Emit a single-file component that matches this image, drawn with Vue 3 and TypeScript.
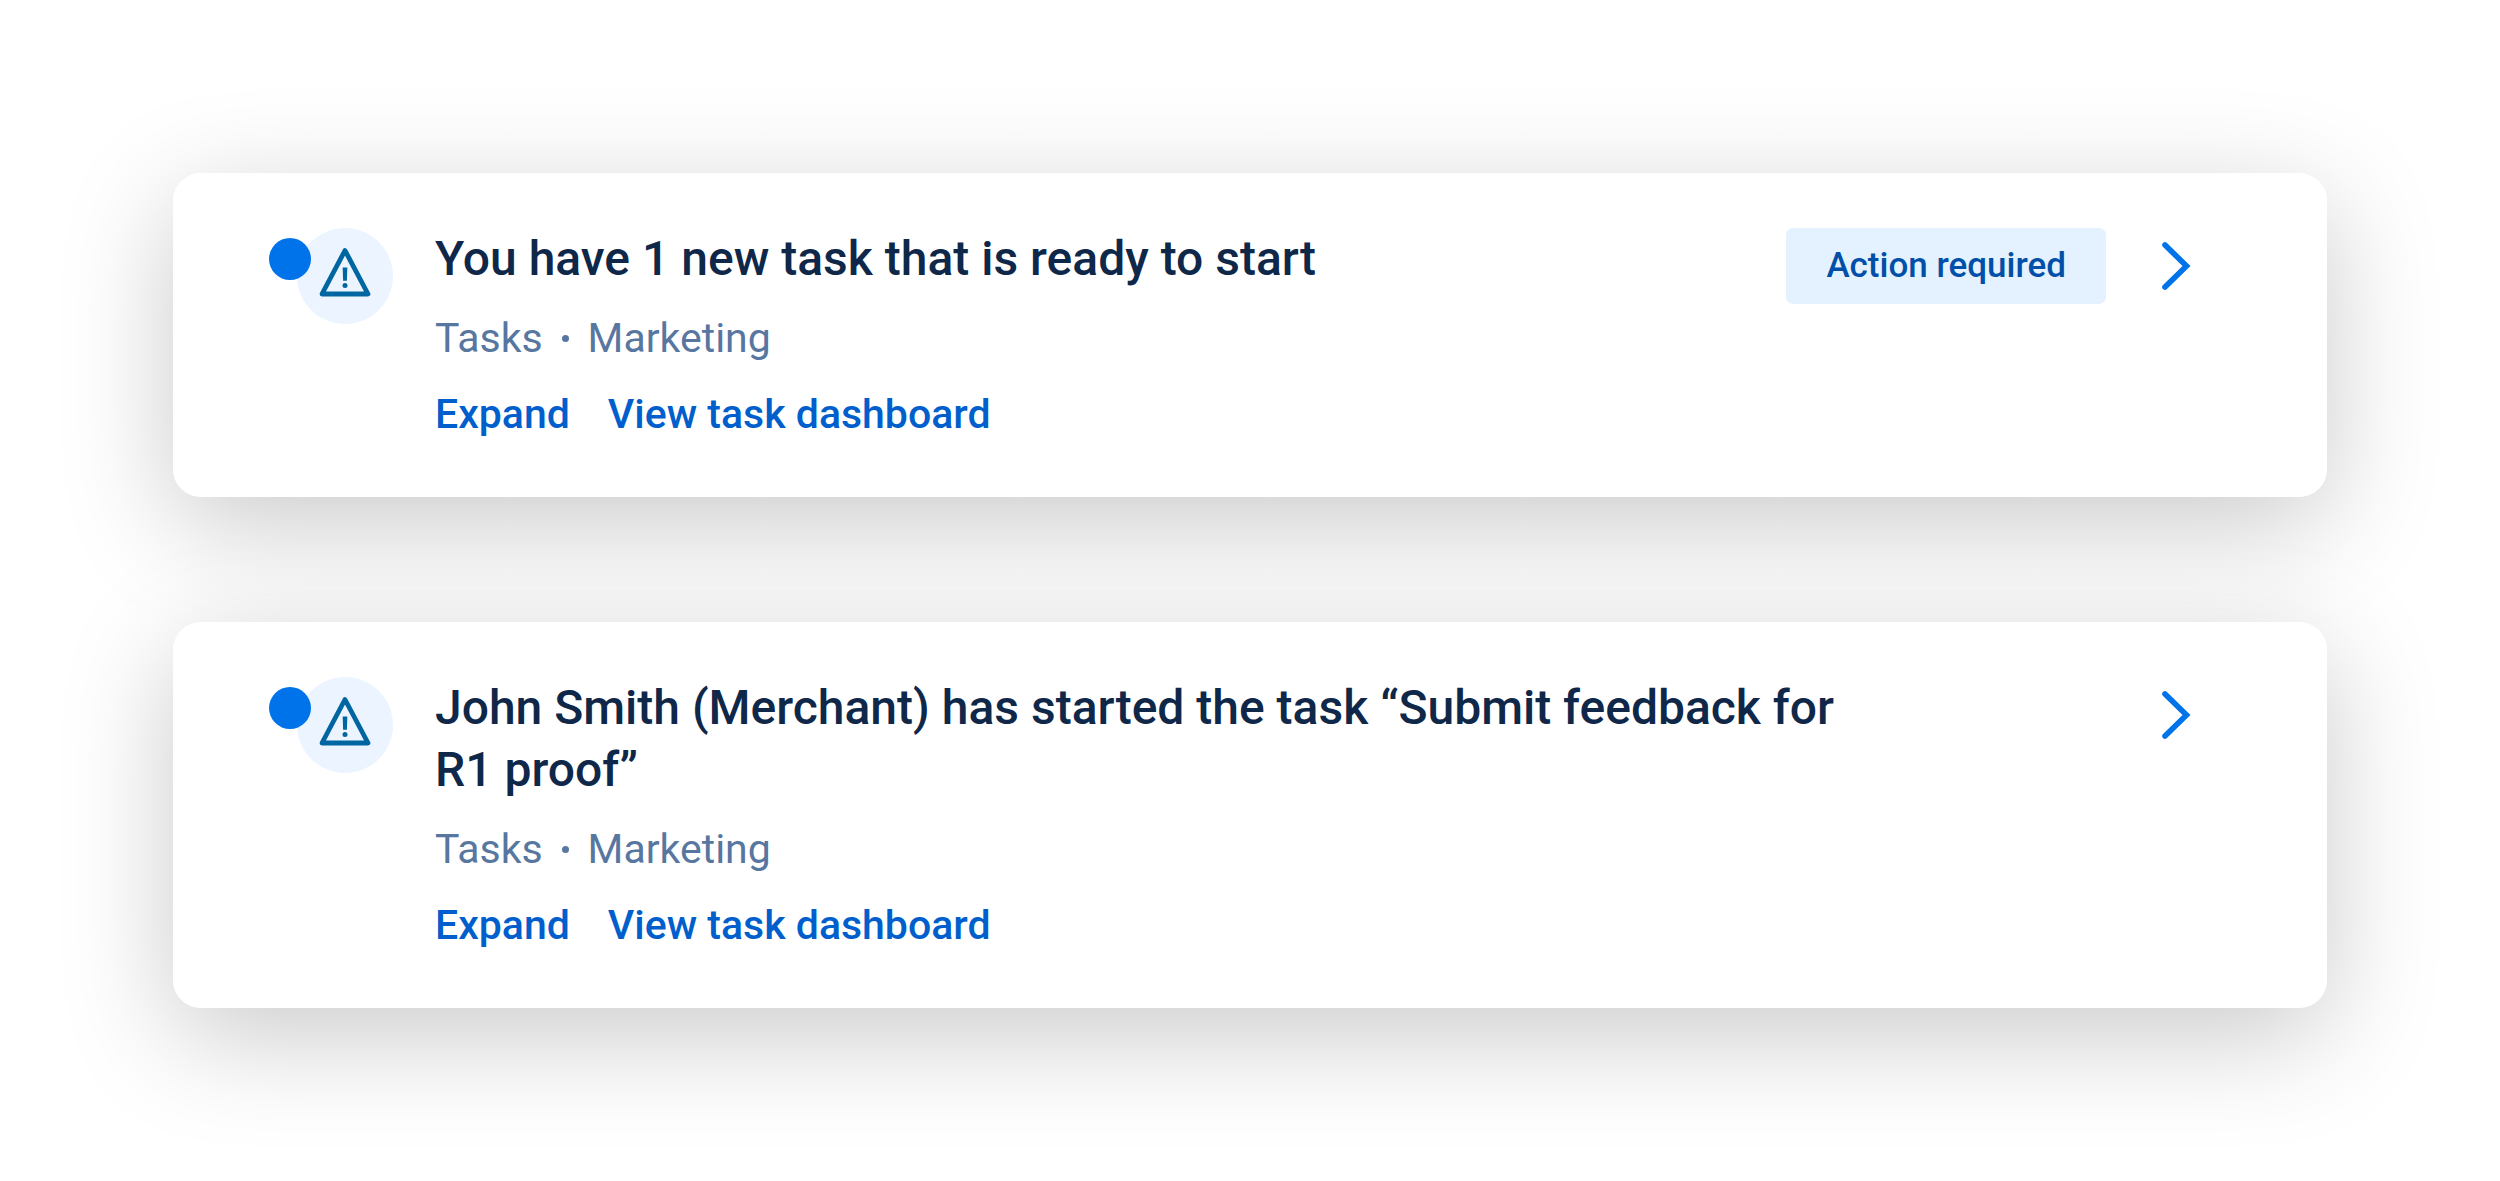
<script setup lang="ts">
interface Notification {
  id: number
  title: string
  source: string
  category: string
  badge?: string
}

const notifications: Notification[] = [
  {
    id: 1,
    title: 'You have 1 new task that is ready to start',
    source: 'Tasks',
    category: 'Marketing',
    badge: 'Action required',
  },
  {
    id: 2,
    title: 'John Smith (Merchant) has started the task “Submit feedback for R1 proof”',
    source: 'Tasks',
    category: 'Marketing',
  },
]
</script>

<template>
  <main class="feed">
    <article v-for="item in notifications" :key="item.id" class="card">
      <div class="marker">
        <span class="unread"></span>
        <span class="avatar">
          <svg class="warning" viewBox="0 0 52 50" aria-hidden="true">
            <path d="M26 3.500 L49 47 H3 Z" fill="none" stroke="#0066a1" stroke-width="4.800" stroke-linejoin="round" />
            <path d="M23.700 20.500 h4.600 l-.4 13.300 h-3.800 Z" fill="#0066a1" />
            <circle cx="26" cy="38.500" r="2.500" fill="#0066a1" />
          </svg>
        </span>
      </div>
      <div class="body">
        <h2 class="title">{{ item.title }}</h2>
        <p class="meta">
          <span>{{ item.source }}</span>
          <span class="dot"></span>
          <span>{{ item.category }}</span>
        </p>
        <div class="links">
          <button type="button" class="link">Expand</button>
          <a href="#" class="link">View task dashboard</a>
        </div>
      </div>
      <div class="aside">
        <span v-if="item.badge" class="badge">{{ item.badge }}</span>
        <button type="button" class="open" aria-label="Open">
          <svg class="chevron" viewBox="0 0 30 50" aria-hidden="true">
            <path d="M4 4 L25.500 25 L4 46" fill="none" stroke="#0073ea" stroke-width="5.600" stroke-linecap="round" />
          </svg>
        </button>
      </div>
    </article>
  </main>
</template>

<style>
body {
  margin: 0;
  background: #fff;
}
</style>

<style scoped>
.feed {
  position: relative;
  z-index: 0;
  display: flex;
  flex-direction: column;
  gap: 125px;
  padding: 173px;
  font-family: Roboto, sans-serif;
}

.card {
  position: relative;
  display: flex;
  align-items: flex-start;
  padding: 55px 110px 55px 96px;
  border-radius: 28px;
  background: #fff;
}

/* Shadows sit below every card so they never tint a neighbour */
.card::before {
  content: '';
  position: absolute;
  z-index: -1;
  inset: 0;
  border-radius: inherit;
  box-shadow: 0 28px 112px rgba(0, 0, 0, 0.21);
}

.marker {
  position: relative;
  flex: none;
  padding-left: 28px;
  margin-right: 42px;
}

.unread {
  position: absolute;
  top: 10px;
  left: 0;
  width: 42px;
  height: 42px;
  border-radius: 50%;
  background: #0073ea;
}

.avatar {
  display: flex;
  align-items: center;
  justify-content: center;
  width: 96px;
  height: 96px;
  border-radius: 50%;
  background: #ebf4ff;
}

.warning {
  width: 52px;
  height: 50px;
  margin-bottom: 8px;
}

.body {
  display: flex;
  flex: 1;
  flex-direction: column;
  gap: 21px;
  min-width: 0;
}

.title {
  margin: 0;
  color: #0f2849;
  font-size: 48px;
  font-weight: 500;
  line-height: 62px;
}

.meta {
  display: flex;
  align-items: center;
  margin: 0;
  color: #5776a0;
  font-size: 41px;
  line-height: 55px;
}

.dot {
  width: 7px;
  height: 7px;
  margin: 0 19px;
  border-radius: 50%;
  background: #5776a0;
}

.links {
  display: flex;
  gap: 38px;
}

.link {
  padding: 0;
  border: 0;
  background: none;
  color: #005fcc;
  font-family: inherit;
  font-size: 41px;
  font-weight: 500;
  line-height: 55px;
  text-decoration: none;
  cursor: pointer;
}

.aside {
  display: flex;
  flex: none;
  align-items: center;
  justify-content: flex-end;
  gap: 28px;
  min-width: 320px;
  height: 76px;
  margin-left: 28px;
}

.badge {
  padding: 0 40px;
  border-radius: 7px;
  background: #e4f1fe;
  color: #004fa8;
  font-size: 35px;
  font-weight: 500;
  line-height: 76px;
  white-space: nowrap;
}

.open {
  display: flex;
  align-items: center;
  justify-content: center;
  width: 83px;
  height: 76px;
  padding: 0;
  border: 0;
  background: none;
  cursor: pointer;
}

.chevron {
  width: 30px;
  height: 50px;
}
</style>
